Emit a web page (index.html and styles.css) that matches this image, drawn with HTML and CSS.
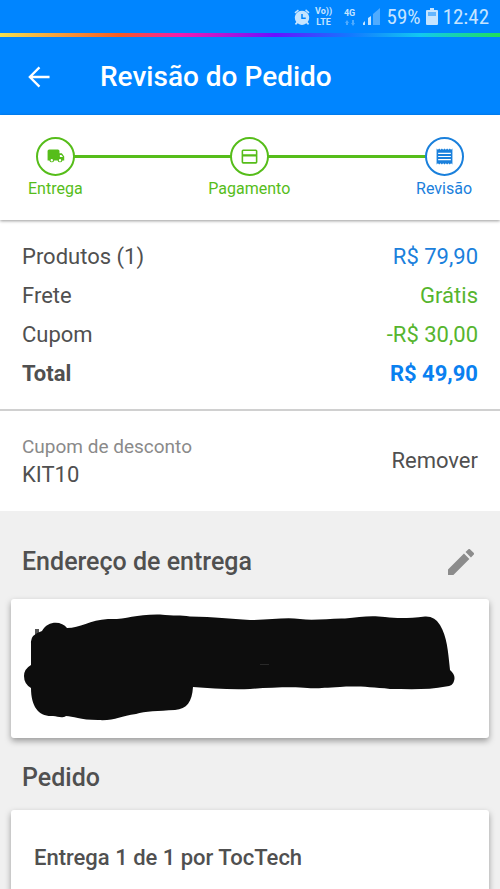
FILE: index.html
```html
<!DOCTYPE html>
<html lang="pt-BR">
<head>
<meta charset="utf-8">
<meta name="viewport" content="width=device-width, initial-scale=1">
<title>Revisão do Pedido</title>
<link rel="stylesheet" href="styles.css">
</head>
<body>
<div class="status-bar">
  <svg class="status-alarm" viewBox="0 0 24 24" aria-hidden="true"><path fill="currentColor" d="M22 5.7l-4.6-3.9-1.3 1.5 4.6 3.9zM7.9 3.4L6.6 1.9 2 5.7l1.3 1.5zM12 3.5a9.5 9.5 0 0 0-7.6 15.200L2.500 21l1.500 1.500 2.200-2.200a9.500 9.500 0 0 0 11.600 0L20 22.500l1.500-1.500-1.900-2.300A9.500 9.500 0 0 0 12 3.500z"/><path d="M12 8v5.500h5" fill="none" stroke="#0085ff" stroke-width="2"/></svg>
  <span class="status-volte"><span>Vo))</span><span>LTE</span></span>
  <span class="status-network"><span>4G</span><svg viewBox="0 0 10 6" aria-hidden="true"><path fill="currentColor" d="M0 3l2-3 2 3H3v2H1V3zM6 3l2 3 2-3H9V0H7v3z"/></svg></span>
  <svg class="status-signal" viewBox="0 0 17 18" aria-hidden="true"><path fill="currentColor" d="M0 15l2-2v4H0zM5 10l3-2v9H5z"/><path fill="currentColor" opacity=".4" d="M10 6l7-6v17h-7z"/></svg>
  <span class="status-text">59%</span>
  <svg class="status-battery" viewBox="0 0 12 18" aria-hidden="true"><path fill="currentColor" d="M4 0h4v2h3q1 0 1 1v13q0 1-1 1H1q-1 0-1-1V3q0-1 1-1h3z"/><path fill="#0085ff" opacity=".5" d="M2 4h8v4H2z"/></svg>
  <span class="status-text">12:42</span>
</div>
<header class="app-bar">
  <button class="icon-button" type="button" aria-label="Voltar"><svg class="back-icon" viewBox="0 0 24 24" aria-hidden="true"><path d="M23.500 12H2.500M12.500 1.500L2 12l10.500 10.500" fill="none" stroke="currentColor" stroke-width="2.500"/></svg></button>
  <h1>Revisão do Pedido</h1>
</header>
<nav class="stepper" aria-label="Etapas do pedido">
  <ol>
    <li>
      <span class="step-circle"><svg viewBox="0 0 24 24" aria-hidden="true"><path fill="currentColor" d="M17 8V5q0-2-2-2H4Q2 3 2 5v12h2.200a3.200 3.200 0 0 0 6.200 0h4.200a3.200 3.200 0 0 0 6.200 0H23v-5l-3-4zM17.500 10h2l2 2.700h-4zM7.300 18.300a1.500 1.500 0 1 1 0-3 1.500 1.500 0 0 1 0 3zM17.700 18.300a1.500 1.500 0 1 1 0-3 1.500 1.500 0 0 1 0 3z"/></svg></span>
      <span>Entrega</span>
    </li>
    <li>
      <span class="step-circle"><svg viewBox="0 0 24 24" aria-hidden="true"><path fill="currentColor" d="M20 3H4a2 2 0 0 0-2 2v14a2 2 0 0 0 2 2h16a2 2 0 0 0 2-2V5a2 2 0 0 0-2-2zm0 16H4v-7h16zm0-10H4V5h16z"/></svg></span>
      <span>Pagamento</span>
    </li>
    <li class="current" aria-current="step">
      <span class="step-circle"><svg viewBox="0 0 24 24" aria-hidden="true"><path fill="currentColor" d="M2 2l1.700 1.500L5.300 2 7 3.500 8.700 2l1.600 1.500L12 2l1.700 1.500L15.300 2 17 3.500 18.700 2l1.600 1.500L22 2v20l-1.700-1.500-1.600 1.500-1.700-1.500-1.700 1.500-1.600-1.500L12 22l-1.700-1.500L8.700 22 7 20.500 5.300 22l-1.600-1.500L2 22zM4 7.300v1.400h16V7.300zm0 4v1.400h16v-1.400zm0 4v1.400h16v-1.400z"/></svg></span>
      <span>Revisão</span>
    </li>
  </ol>
</nav>
<main>
  <dl class="summary">
    <div><dt>Produtos (1)</dt><dd class="blue">R$ 79,90</dd></div>
    <div><dt>Frete</dt><dd class="green">Grátis</dd></div>
    <div><dt>Cupom</dt><dd class="green">-R$ 30,00</dd></div>
    <div class="total"><dt>Total</dt><dd>R$ 49,90</dd></div>
  </dl>
  <section class="coupon">
    <div>
      <p class="coupon-label">Cupom de desconto</p>
      <p class="coupon-code">KIT10</p>
    </div>
    <button class="text-button" type="button">Remover</button>
  </section>
  <section class="details">
    <div class="section-head">
      <h2>Endereço de entrega</h2>
      <button class="icon-button edit" type="button" aria-label="Editar endereço"><svg class="edit-icon" viewBox="3 3 18 18" aria-hidden="true"><path fill="currentColor" d="M3 17.250V21h3.750L17.810 9.940l-3.750-3.750zM20.710 7.040a1 1 0 0 0 0-1.410l-2.340-2.340a1 1 0 0 0-1.410 0l-1.830 1.830 3.750 3.750z"/></svg></button>
    </div>
    <div class="card address">
      <svg viewBox="11 599 478 139" aria-hidden="true"><path fill="#555" d="M35 629h4v6h-4z"/><path fill="#0d0d0d" d="M31 643Q30 635 42 631C48 620 62 621 67 628C80 628 90 620 108 619C125 620 135 614 160 614.500C175 616 180 615 190 616.500C215 617 230 619 250 620C270 620 285 617 300 619C315 621 330 618 345 618.500C360 617 370 615 385 617C400 619 410 618 425 616.500Q435 616 440 625C447 637 448 650 450 670Q456 675 454 681Q453 686 446 686.500C430 690 410 689 390 689C370 687 355 686 340 687C320 688 315 689 300 687.500C285 687 265 688 250 689C230 690 210 688 193 687C192 702 187 709 175 710C158 711 145 711 136 714C120 716 115 721 98 720C80 720 73 716 66 716C61 719 58 716 53 716C39 717 31 707 31 688Q24 684 24 676Q24 669 31 665Z"/><path fill="#292929" d="M260 664h9v1h-9z"/></svg>
    </div>
    <div class="section-head"><h2>Pedido</h2></div>
    <div class="card order"><h3>Entrega 1 de 1 por TocTech</h3></div>
  </section>
</main>
</body>
</html>
```
FILE: styles.css
```css
* { box-sizing: border-box; margin: 0; padding: 0; }

body {
  min-height: 100vh;
  display: flex;
  flex-direction: column;
  background: #fff;
  color: #505050;
  font-family: Roboto, sans-serif;
  font-size: 22px;
  line-height: 28px;
}

svg { display: block; }
button { border: 0; background: none; color: inherit; font: inherit; cursor: pointer; }

.status-bar {
  display: flex;
  align-items: center;
  justify-content: flex-end;
  height: 33px;
  padding: 0 11px;
  background: #0085ff;
  color: #c5e4ff;
}
.status-alarm { width: 18px; height: 18px; margin-right: 4px; }
.status-volte, .status-network {
  display: flex;
  flex-direction: column;
  align-items: center;
  font-size: 9px;
  font-weight: 700;
  line-height: 11px;
}
.status-volte { width: 18px; margin-right: 9px; }
.status-network { width: 16px; gap: 1px; margin-right: 5px; }
.status-network svg { width: 10px; height: 6px; opacity: .4; }
.status-signal { width: 17px; height: 18px; margin-right: 7px; }
.status-text { font-family: "Roboto Condensed", Roboto, sans-serif; font-size: 21px; }
.status-battery { width: 12px; height: 18px; margin: 0 5px; }

.app-bar {
  display: flex;
  align-items: center;
  height: 82px;
  padding: 6px 24px 0;
  background: linear-gradient(90deg, #f5e050, #f95a20 24%, #f51bb0 36%, #6a10ff 55%, #1478ff 70%, #12c8f0 84%, #1fe05a) top / 100% 4px no-repeat, #0085ff;
  color: #fff;
}
.icon-button { padding: 4px; }
.back-icon { width: 22px; height: 22px; }
h1 { margin-left: 46px; font-size: 28px; font-weight: 500; line-height: 36px; }

.stepper {
  position: relative;
  padding: 22px 28px 20px;
  background: #fff;
  box-shadow: 0 1px 3px rgba(0, 0, 0, .4);
}
.stepper ol {
  display: flex;
  justify-content: space-between;
  list-style: none;
  background: linear-gradient(#56bd1a, #56bd1a) center 18px / calc(100% - 56px) 3px no-repeat;
}
.stepper li {
  display: flex;
  flex-direction: column;
  align-items: center;
  gap: 2px;
  color: #56bd1a;
  font-size: 16px;
  line-height: 22px;
}
.stepper .current { color: #1a80dc; }
.step-circle {
  display: grid;
  place-items: center;
  width: 39px;
  height: 39px;
  border: 2px solid;
  border-radius: 50%;
  background: #fff;
}
.step-circle svg { width: 19px; height: 19px; }

main { flex: 1; display: flex; flex-direction: column; }

.summary {
  display: grid;
  gap: 11px;
  padding: 23px 22px 21px;
  border-bottom: 2px solid #d0d0d0;
}
.summary div { display: flex; justify-content: space-between; }
.blue { color: #1a80dc; }
.green { color: #56b52e; }
.total { font-weight: 700; }
.total dd { color: #0a80f0; }

.coupon {
  display: flex;
  align-items: center;
  justify-content: space-between;
  padding: 22px;
}
.coupon-label { color: #8a8a8a; font-size: 19px; }

.details {
  flex: 1;
  display: flex;
  flex-direction: column;
  padding: 11px 11px 0;
  background: #f0f0f0;
}
.section-head {
  display: flex;
  align-items: center;
  justify-content: space-between;
  min-height: 72px;
  padding: 8px 11px 0;
}
.section-head .edit { color: #8c8c8c; }
.edit-icon { width: 26px; height: 26px; }
h2 { font-size: 25px; font-weight: 500; line-height: 32px; }

.card {
  border-radius: 3px;
  background: #fff;
  box-shadow: 0 3px 6px rgba(0, 0, 0, .36);
}
.address { margin-top: 5px; }
.address svg { width: 100%; height: auto; }
.order { flex: 1; padding: 34px 23px 20px; border-radius: 3px 3px 0 0; }
h3 { font-size: 22px; font-weight: 500; line-height: 28px; }
```
